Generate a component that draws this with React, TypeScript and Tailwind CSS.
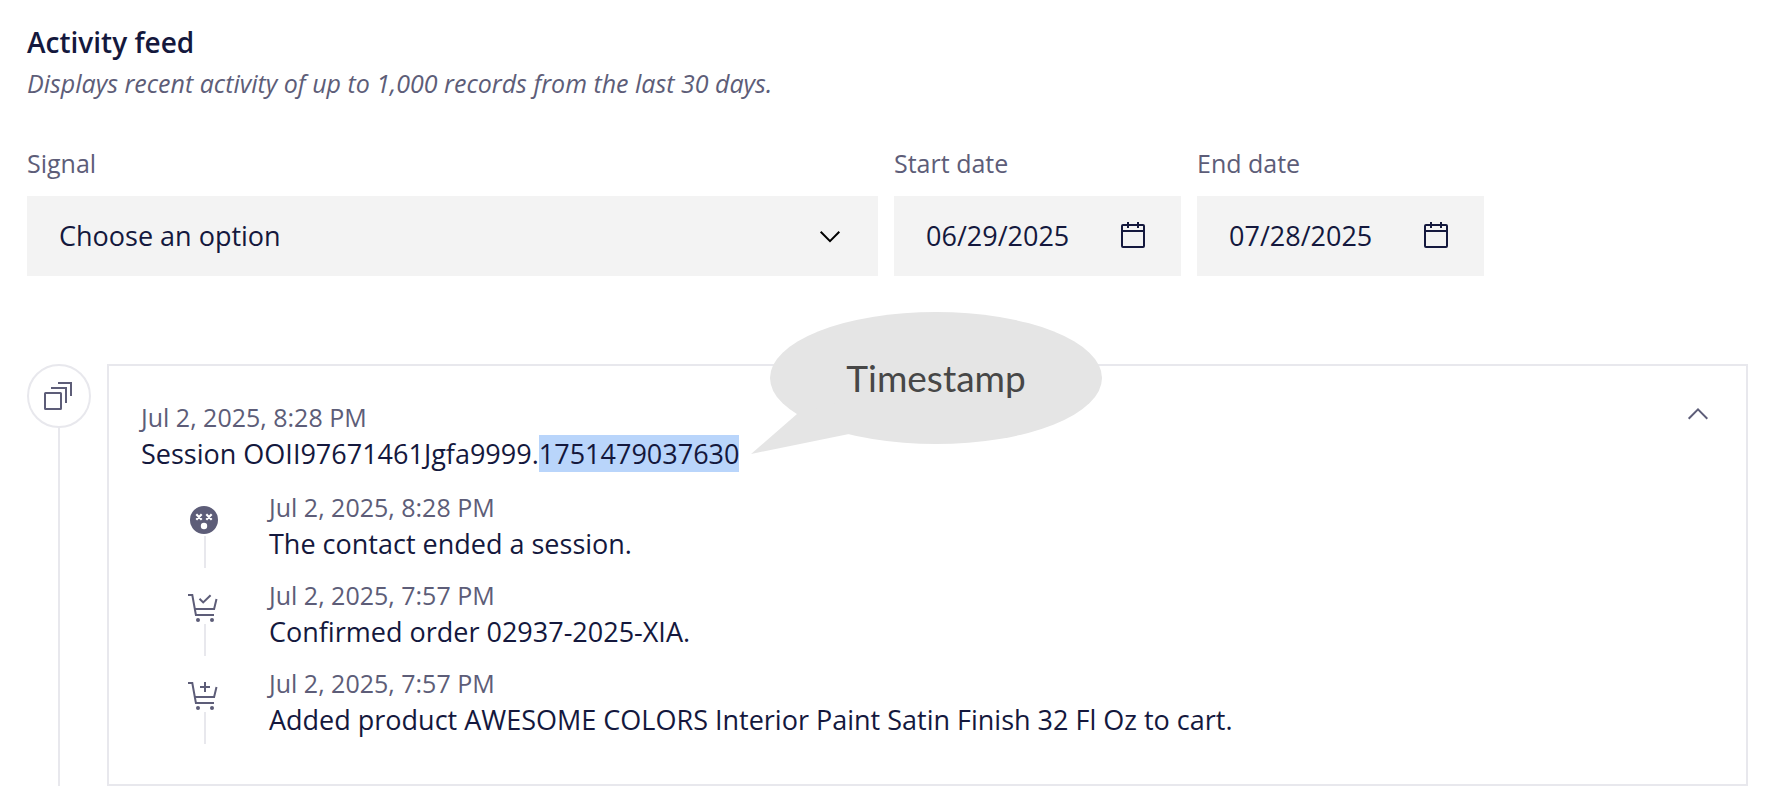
import { useState } from "react";

type EventKind = "ended" | "confirmed" | "added";

const EVENTS: { kind: EventKind; date: string; text: string }[] = [
  { kind: "ended", date: "Jul 2, 2025, 8:28 PM", text: "The contact ended a session." },
  { kind: "confirmed", date: "Jul 2, 2025, 7:57 PM", text: "Confirmed order 02937-2025-XIA." },
  {
    kind: "added",
    date: "Jul 2, 2025, 7:57 PM",
    text: "Added product AWESOME COLORS Interior Paint Satin Finish 32 Fl Oz to cart."
  }
];

function Chevron({ up = false }: { up?: boolean }) {
  return (
    <svg viewBox="0 0 32 32" className="h-8 w-8" fill="none" stroke="currentColor" strokeWidth="2">
      <path d={up ? "M6.7 20.7 16 11.4l9.3 9.3" : "M6.7 11.8 16 21.1l9.3-9.3"} />
    </svg>
  );
}

function CalendarIcon() {
  return (
    <svg viewBox="0 0 32 32" className="h-8 w-8" fill="none" stroke="currentColor" strokeWidth="2">
      <rect x="5" y="5" width="22" height="22" rx="1" />
      <path d="M5 11h22M11 2v6M21 2v6" />
    </svg>
  );
}

function SessionIcon() {
  return (
    <svg viewBox="0 0 30 28" className="h-7 w-[30px]" fill="none" stroke="currentColor" strokeWidth="2">
      <rect x="1" y="11" width="16" height="16" rx="0.5" />
      <path d="M7 6h15v15M14 1h13v13" />
    </svg>
  );
}

function EventIcon({ kind }: { kind: EventKind }) {
  if (kind === "ended") {
    return (
      <svg viewBox="1 0 32 32" className="h-8 w-8">
        <circle cx="16" cy="16" r="14" fill="currentColor" />
        <path
          d="m8.3 10.3 5.4 5.4m0-5.4-5.4 5.4M18.3 10.3l5.4 5.4m0-5.4-5.4 5.4"
          stroke="white"
          strokeWidth="2.2"
        />
        <circle cx="16" cy="22" r="3.2" fill="white" />
      </svg>
    );
  }
  return (
    <svg
      viewBox="1 0 32 32"
      className="h-8 w-8 overflow-visible"
      fill="none"
      stroke="currentColor"
      strokeWidth="2"
    >
      <path d="M0 3h4.3l3.6 20H26M6.9 17h19.2l2.4-10" />
      <circle cx="10" cy="28" r="2" fill="currentColor" stroke="none" />
      <circle cx="24" cy="28" r="2" fill="currentColor" stroke="none" />
      <path d={kind === "confirmed" ? "m11.5 6.8 3.7 3.6 7.4-7.2" : "M12 7h10M17 2v10"} />
    </svg>
  );
}

function DateField({ id, label, initial }: { id: string; label: string; initial: string }) {
  const [value, setValue] = useState(initial);

  return (
    <div className="min-w-0">
      <label htmlFor={id} className="block text-[25px] leading-8 text-[#5d5d78]">
        {label}
      </label>
      <div className="mt-[17px] flex h-20 items-center bg-[#f3f3f3] px-8">
        <input
          id={id}
          value={value}
          onChange={(event) => setValue(event.target.value)}
          className="min-w-0 flex-1 bg-transparent text-[27px] leading-10 outline-none"
        />
        <button type="button" aria-label={`Open ${label.toLowerCase()} calendar`}>
          <CalendarIcon />
        </button>
      </div>
    </div>
  );
}

function Callout() {
  return (
    <div className="pointer-events-none absolute -top-[54px] left-[641px]">
      <svg viewBox="0 0 352 142" className="h-[142px] w-[352px]" fill="#e5e5e5">
        <ellipse cx="186" cy="66" rx="166" ry="66" />
        <path d="M47 102 1 142l98-20 20-40z" />
      </svg>
      <div className="absolute inset-x-0 top-0 flex h-[132px] items-center justify-center pl-5 font-[Lato,sans-serif] text-[37px] text-[#474747]">
        Timestamp
      </div>
    </div>
  );
}

export default function App() {
  const [open, setOpen] = useState(true);

  return (
    <main className="bg-white pt-[22px] pr-[18px] pb-6 pl-[27px] font-['Open_Sans',sans-serif] text-[27px] leading-10 text-[#14183d]">
      <h1 className="text-[28px] leading-10 font-semibold">Activity feed</h1>
      <p className="mt-[5px] text-[25px] leading-8 text-[#5d5d78] italic">
        Displays recent activity of up to 1,000 records from the last 30 days.
      </p>

      <div className="mt-12 grid grid-cols-[851fr_287fr_287fr_248fr] gap-4">
        <div className="min-w-0">
          <label htmlFor="signal" className="block text-[25px] leading-8 text-[#5d5d78]">
            Signal
          </label>
          <div className="relative mt-[17px]">
            <select
              id="signal"
              className="block h-20 w-full appearance-none bg-[#f3f3f3] px-8 text-[27px] outline-none"
            >
              <option>Choose an option</option>
            </select>
            <span className="pointer-events-none absolute inset-y-0 right-8 flex items-center text-black">
              <Chevron />
            </span>
          </div>
        </div>
        <DateField id="start" label="Start date" initial="06/29/2025" />
        <DateField id="end" label="End date" initial="07/28/2025" />
      </div>

      <section className="mt-22 flex gap-4">
        <div className="flex shrink-0 flex-col items-center text-[#5d5d78]">
          <div className="flex h-16 w-16 items-center justify-center rounded-full border-2 border-[#e8e8ed]">
            <SessionIcon />
          </div>
          <div className="w-0.5 flex-1 bg-[#e8e8ed]" />
        </div>

        <article className="relative min-w-0 flex-1 border-2 border-[#e8e8ed] px-8 pt-8 pb-10">
          <div className="flex items-start justify-between">
            <div className="flex flex-col gap-px pt-[3px]">
              <p className="text-[25px] leading-8 text-[#5d5d78]">Jul 2, 2025, 8:28 PM</p>
              <h2>
                Session OOII97671461Jgfa9999.
                <mark className="bg-[#b9d5fb] text-inherit">1751479037630</mark>
              </h2>
            </div>
            <button
              type="button"
              aria-label="Toggle session"
              aria-expanded={open}
              onClick={() => setOpen(!open)}
              className="text-[#5d5d78]"
            >
              <Chevron up={open} />
            </button>
          </div>

          {open ? (
            <ul className="mt-[17px] flex flex-col gap-[11px]">
              {EVENTS.map((item) => (
                <li key={item.kind} className="flex">
                  <div className="flex w-32 shrink-0 flex-col items-center pt-[13px] text-[#5d5d78]">
                    <EventIcon kind={item.kind} />
                    <div className="h-8 w-0.5 bg-[#e8e8ed]" />
                  </div>
                  <div className="flex min-w-0 flex-col gap-px">
                    <p className="text-[25px] leading-8 text-[#5d5d78]">{item.date}</p>
                    <p>{item.text}</p>
                  </div>
                </li>
              ))}
            </ul>
          ) : null}

          <Callout />
        </article>
      </section>
    </main>
  );
}
